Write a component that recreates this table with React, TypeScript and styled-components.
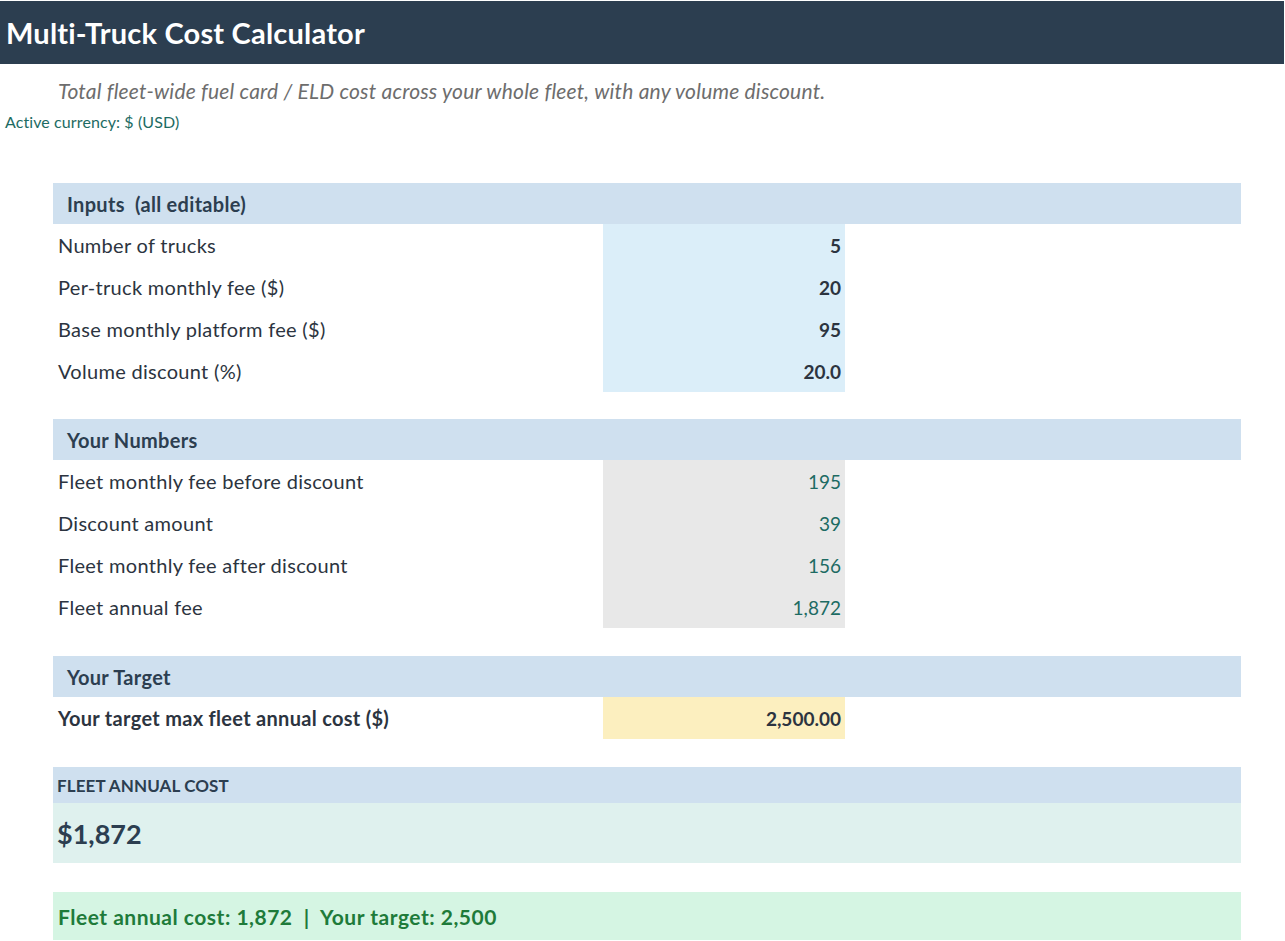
import { createGlobalStyle } from 'styled-components'
import styled from 'styled-components'

const GlobalStyle = createGlobalStyle`
  body {
    margin: 0;
    background: #fff;
    font-family: Lato, 'Open Sans', sans-serif;
  }
`

const Page = styled.div`
  width: 1285px;
  padding-top: 1px;
`

const TitleBar = styled.header`
  height: 63px;
  margin-right: 1px;
  background: #2c3e50;
  display: flex;
  align-items: center;
  padding-left: 6px;
`

const Title = styled.h1`
  margin: 0;
  color: #fff;
  font-size: 29px;
  letter-spacing: 0.2px;
  font-weight: 700;
`

const Subtitle = styled.p`
  margin: 15px 0 0;
  padding-left: 58px;
  font-size: 21px;
  letter-spacing: 0.2px;
  font-style: italic;
  color: #6d6d6d;
  line-height: 24px;
`

const Currency = styled.div`
  padding-left: 5px;
  margin-top: 10px;
  font-size: 16px;
  letter-spacing: 0.1px;
  color: #1d6b63;
  line-height: 18px;
`

const Main = styled.main`
  margin: 52px 0 0 53px;
  width: 1188px;
`

const Section = styled.section<{ $gap?: number }>`
  margin-top: ${({ $gap }) => $gap ?? 0}px;
`

const SectionHead = styled.div<{ $height?: number; $pad?: number; $upper?: boolean }>`
  height: ${({ $height }) => $height ?? 41}px;
  background: #cfe0ef;
  display: flex;
  align-items: center;
  padding-left: ${({ $pad }) => $pad ?? 14}px;
  font-size: ${({ $upper }) => ($upper ? 17 : 20)}px;
  letter-spacing: ${({ $upper }) => ($upper ? 0.1 : 0.3)}px;
  font-weight: 700;
  color: #2c3e50;
  text-transform: ${({ $upper }) => ($upper ? 'uppercase' : 'none')};
`

const Row = styled.div`
  display: grid;
  grid-template-columns: 550px 242px;
  height: 42px;
`

const Label = styled.div<{ $bold?: boolean }>`
  display: flex;
  align-items: center;
  padding-left: 5px;
  font-size: 20px;
  letter-spacing: 0.3px;
  font-weight: ${({ $bold }) => ($bold ? 700 : 400)};
  color: #2c3440;
`

type Tone = 'input' | 'calc' | 'target'

const cellBg: Record<Tone, string> = {
  input: '#dbeef9',
  calc: '#e8e8e8',
  target: '#fcefbf',
}

const Value = styled.div<{ $tone: Tone }>`
  display: flex;
  align-items: center;
  justify-content: flex-end;
  padding-right: 4px;
  background: ${({ $tone }) => cellBg[$tone]};
  font-size: 19px;
  font-weight: ${({ $tone }) => ($tone === 'calc' ? 400 : 700)};
  color: ${({ $tone }) => ($tone === 'calc' ? '#1d6b63' : '#2c3440')};
`

const BigResult = styled.div`
  height: 60px;
  background: #dff1ee;
  display: flex;
  align-items: center;
  padding-left: 4px;
  font-size: 27px;
  font-weight: 700;
  color: #2c3e50;
`

const Verdict = styled.div`
  margin-top: 29px;
  height: 48px;
  background: #d5f5e3;
  display: flex;
  align-items: center;
  padding-left: 5px;
  font-size: 21px;
  letter-spacing: 0.5px;
  font-weight: 700;
  color: #1e7b3a;
  white-space: pre;
`

const inputs = [
  ['Number of trucks', '5'],
  ['Per-truck monthly fee ($)', '20'],
  ['Base monthly platform fee ($)', '95'],
  ['Volume discount (%)', '20.0'],
]

const numbers = [
  ['Fleet monthly fee before discount', '195'],
  ['Discount amount', '39'],
  ['Fleet monthly fee after discount', '156'],
  ['Fleet annual fee', '1,872'],
]

export default function App() {
  return (
    <Page>
      <GlobalStyle />
      <TitleBar>
        <Title>Multi-Truck Cost Calculator</Title>
      </TitleBar>
      <Subtitle>
        Total fleet-wide fuel card / ELD cost across your whole fleet, with any volume discount.
      </Subtitle>
      <Currency>Active currency: $ (USD)</Currency>

      <Main>
        <Section>
          <SectionHead>Inputs&nbsp; (all editable)</SectionHead>
          {inputs.map(([label, value]) => (
            <Row key={label}>
              <Label>{label}</Label>
              <Value $tone="input">{value}</Value>
            </Row>
          ))}
        </Section>

        <Section $gap={27}>
          <SectionHead>Your Numbers</SectionHead>
          {numbers.map(([label, value]) => (
            <Row key={label}>
              <Label>{label}</Label>
              <Value $tone="calc">{value}</Value>
            </Row>
          ))}
        </Section>

        <Section $gap={28}>
          <SectionHead>Your Target</SectionHead>
          <Row>
            <Label $bold>Your target max fleet annual cost ($)</Label>
            <Value $tone="target">2,500.00</Value>
          </Row>
        </Section>

        <Section $gap={28}>
          <SectionHead $height={36} $pad={4} $upper>
            Fleet annual cost
          </SectionHead>
          <BigResult>$1,872</BigResult>
        </Section>

        <Verdict>Fleet annual cost: 1,872  |  Your target: 2,500</Verdict>
      </Main>
    </Page>
  )
}
